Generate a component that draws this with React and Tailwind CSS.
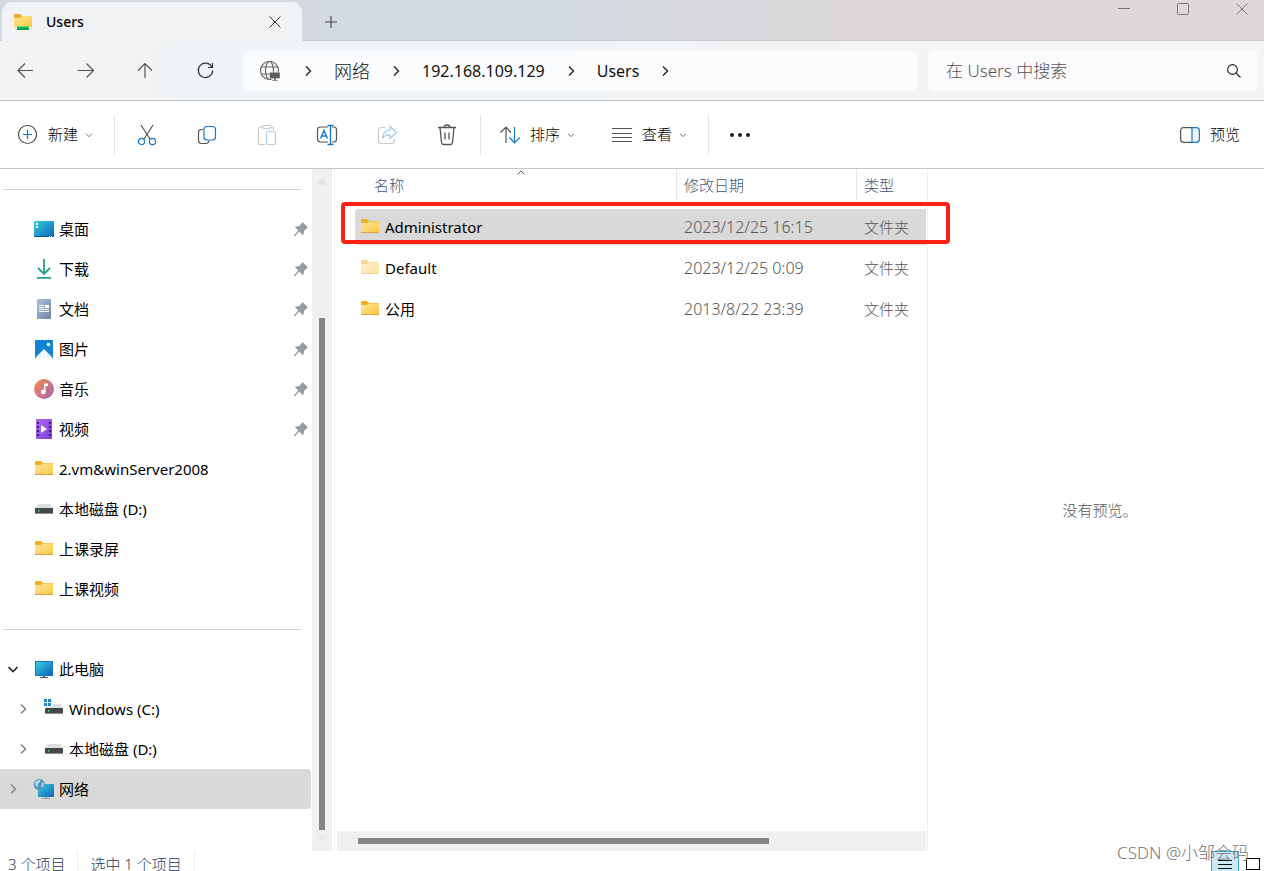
import { useState } from "react";

// =========================
// DATA
// =========================
const pinned = [
  { name: "桌面", icon: DesktopIcon, pin: true },
  { name: "下载", icon: DownloadIcon, pin: true },
  { name: "文档", icon: DocumentIcon, pin: true },
  { name: "图片", icon: PictureIcon, pin: true },
  { name: "音乐", icon: MusicIcon, pin: true },
  { name: "视频", icon: VideoIcon, pin: true },
  { name: "2.vm&winServer2008", icon: FolderIcon },
  { name: "本地磁盘 (D:)", icon: DriveIcon },
  { name: "上课录屏", icon: FolderIcon },
  { name: "上课视频", icon: FolderIcon },
];

const files = [
  { name: "Administrator", date: "2023/12/25 16:15", type: "文件夹" },
  { name: "Default", date: "2023/12/25 0:09", type: "文件夹", hidden: true },
  { name: "公用", date: "2013/8/22 23:39", type: "文件夹" },
];

// =========================
// FILE ICONS
// =========================
function FolderIcon({ className = "" }) {
  return (
    <svg className={`w-5 h-5 shrink-0 ${className}`} viewBox="0 0 20 20">
      <defs>
        <linearGradient id="folder" x1="0" y1="0" x2="1" y2="1">
          <stop offset="0" stopColor="#ffe69c" />
          <stop offset="1" stopColor="#fbc83f" />
        </linearGradient>
      </defs>
      <path d="M1 3q0-1 1-1h5l2 2h9q1 0 1 1v3H1z" fill="#ecb022" />
      <path d="M1 6h6l2-1.500h10V15q0 1-1 1H2q-1 0-1-1z" fill="url(#folder)" />
      <path d="M1 15.500h18" stroke="#dca63a" />
    </svg>
  );
}

function DesktopIcon() {
  return (
    <svg className="w-5 h-5 shrink-0" viewBox="0 0 20 20">
      <defs>
        <linearGradient id="screen" x1="0" y1="0" x2="1" y2="1">
          <stop offset="0" stopColor="#3bd0dc" />
          <stop offset="1" stopColor="#0b63bd" />
        </linearGradient>
      </defs>
      <rect y="2" width="20" height="16" rx="1" fill="url(#screen)" />
      <path d="M0 17h20q0 1-1 1H1q-1 0-1-1z" fill="#0c4f8c" />
      <path d="M2 4h2v2H2zM2 7h2v2H2z" fill="#e9fbff" />
      <path d="M15 17.500h1m1 0h1" stroke="#fff" />
    </svg>
  );
}

function DownloadIcon() {
  return (
    <svg className="w-5 h-5 shrink-0" viewBox="0 0 20 20" fill="none" stroke="#27a186" strokeWidth="1.800">
      <path d="M10 0v14M4 9l6 6 6-6M3 18.800h14" />
    </svg>
  );
}

function DocumentIcon() {
  return (
    <svg className="w-5 h-5 shrink-0" viewBox="0 0 20 20">
      <defs>
        <linearGradient id="doc" x1="0" y1="0" x2="1" y2="1">
          <stop offset="0" stopColor="#abc0d6" />
          <stop offset="1" stopColor="#6b87a6" />
        </linearGradient>
      </defs>
      <rect x="3" width="14" height="20" rx="1" fill="url(#doc)" />
      <path d="M5 6.500h5M5 8.500h5M5 10.500h10M5 12.500h10" stroke="#fff" />
      <path d="M11 6h4v3h-4z" fill="#fff" />
    </svg>
  );
}

function PictureIcon() {
  return (
    <svg className="w-5 h-5 shrink-0" viewBox="0 0 20 20">
      <rect x="1" y="1" width="18" height="18" rx="1" fill="#1183d3" />
      <path d="M2 18l8-8 8 8q-.5 1-1 1H3q-.5 0-1-1z" fill="#f2faff" />
      <circle cx="14.500" cy="5.500" r="1.800" fill="#fff" />
    </svg>
  );
}

function MusicIcon() {
  return (
    <svg className="w-5 h-5 shrink-0" viewBox="0 0 20 20">
      <defs>
        <linearGradient id="music" x1="0" y1="0" x2="1" y2="1">
          <stop offset="0.100" stopColor="#f0875a" />
          <stop offset="1" stopColor="#a662b5" />
        </linearGradient>
      </defs>
      <circle cx="10" cy="10" r="10" fill="url(#music)" />
      <path d="M10 4.500h4V7h-2.500v6H10z" fill="#fff" />
      <circle cx="9.200" cy="13" r="2.400" fill="#fff" />
    </svg>
  );
}

function VideoIcon() {
  return (
    <svg className="w-5 h-5 shrink-0" viewBox="0 0 20 20">
      <defs>
        <linearGradient id="video" x1="0" y1="0" x2="1" y2="1">
          <stop offset="0" stopColor="#b56af0" />
          <stop offset="1" stopColor="#7a3ed8" />
        </linearGradient>
      </defs>
      <rect x="2" width="16" height="20" rx="1" fill="url(#video)" />
      <path d="M4 3v15M16 3v15" stroke="#3f1c86" strokeWidth="2" strokeDasharray="2 2" />
      <path d="M7 6v8l6-4z" fill="#fff" />
    </svg>
  );
}

function DriveIcon({ windows }) {
  return (
    <svg className="w-5 h-5 shrink-0" viewBox="0 0 20 20" overflow="visible">
      <path d="M4 5h12l3 4H1z" fill="#dcdedf" />
      <rect x="1" y="9" width="18" height="6" rx="0.500" fill="#46494b" />
      <path d="M1 14.500h18" stroke="#8b8e90" />
      <path d="M4 11h1.500v1.500H4z" fill="#49e35e" />
      {windows && (
        <>
          <path d="M-1-1h9v9h-9z" fill="#fff" />
          <path d="M0 0h3v3H0zM4 0h3v3H4zM0 4h3v3H0zM4 4h3v3H4z" fill="#1a86cf" />
        </>
      )}
    </svg>
  );
}

function WindowsDriveIcon() {
  return <DriveIcon windows />;
}

function ComputerIcon() {
  return (
    <svg className="w-5 h-5 shrink-0" viewBox="0 0 20 20">
      <rect x="1" y="2" width="18" height="15" fill="#1777b9" />
      <rect x="2" y="3" width="16" height="13" fill="url(#screen)" />
      <path d="M9 17h2v1h3v1H6v-1h3z" fill="#555f68" />
    </svg>
  );
}

function NetworkIcon() {
  return (
    <svg className="w-5 h-5 shrink-0" viewBox="0 0 20 20" overflow="visible">
      <rect x="4" y="5" width="16" height="13" rx="1" fill="url(#screen)" />
      <path d="M11 18h2v1h3v1H8v-1h3z" fill="#9b9fa2" />
      <circle cx="5.300" cy="5.500" r="5.500" fill="#4a97bd" />
      <path d="M1 3.500q2-3 5-2.500 1 2-1 3t-1 4q-3-1-3-4.500" fill="#b9deeb" />
      <path d="M8 3l2 1.500-1 4-2-1z" fill="#a9d5e7" />
    </svg>
  );
}

function PinIcon() {
  return (
    <svg className="w-[14px] h-[14px] shrink-0" viewBox="0 0 14 14" fill="#929da5">
      <path d="M8.500 0L14 5.500 12.500 6.500 9.800 9.200V12L8.600 13 5.400 9.600 1 14H0v-1l4.400-4.400L1 5.300 2.200 4.200H5L7.600 1.500z" />
    </svg>
  );
}

function Chevron({ dir = "right", size = "w-3 h-3", color = "#222", width = 1.4 }) {
  const paths = {
    right: "M4 1.500L8.500 6 4 10.500",
    down: "M1.500 4L6 8.500 10.500 4",
    up: "M1 8L6 3 11 8",
  };

  return (
    <svg className={`${size} shrink-0`} viewBox="0 0 12 12" fill="none" stroke={color} strokeWidth={width}>
      <path d={paths[dir]} />
    </svg>
  );
}

// =========================
// SHARED PIECES
// =========================
function IconButton({ label, disabled, children }) {
  return (
    <button
      type="button"
      aria-label={label}
      disabled={disabled}
      className="w-10 h-10 shrink-0 flex items-center justify-center rounded"
    >
      <svg
        className="w-6 h-6"
        viewBox="0 0 24 24"
        fill="none"
        stroke={disabled ? "#c9c9c9" : "#555"}
        strokeWidth="1.200"
      >
        {children}
      </svg>
    </button>
  );
}

function Divider() {
  return <div className="w-px h-10 shrink-0 bg-[#e6e6e6]" />;
}

function SideItem({ item, chevron, active, nested, onClick }) {
  const Icon = item.icon;

  return (
    <button
      type="button"
      onClick={onClick}
      className={`w-full h-10 pr-[3px] flex items-center text-left rounded-r-sm ${nested ? "pl-[17px]" : "pl-[7px]"} ${
        active ? "bg-[#d9d9d9]" : ""
      }`}
    >
      <span className="w-[27px] shrink-0">
        {chevron && (
          <Chevron
            dir={chevron}
            color={chevron === "down" ? "#222" : "#8a8a8a"}
            width={1.6}
          />
        )}
      </span>
      <Icon />
      <span className="ml-[5px] flex-1 text-[15px] font-normal whitespace-nowrap">
        {item.name}
      </span>
      {item.pin && <PinIcon />}
    </button>
  );
}

export default function App() {
  const [search, setSearch] = useState("");
  const [place, setPlace] = useState("网络");
  const [selected, setSelected] = useState("Administrator");

  return (
    <div className="relative h-screen flex flex-col overflow-hidden bg-white text-black font-light font-['Noto_Sans','Noto_Sans_CJK_SC',sans-serif]">

      {/* TITLE BAR */}
      <header className="h-[41px] shrink-0 flex items-end pl-[2px] border-b border-[#c6cbd0] bg-linear-to-r from-[#d5d8dc] via-[#d3dbe3] via-40% to-[#dfd8d8] to-75%">
        <div className="w-[300px] h-[39px] -mb-px pl-[11px] pr-[21px] flex items-center rounded-t-[10px] bg-[#f2f3f4]">
          <svg className="w-5 h-5" viewBox="0 0 20 20">
            <path d="M1 3q0-1 1-1h5l2 2h9q1 0 1 1v3H1z" fill="#ecb022" />
            <path d="M1 6h6l2-2h10v11H1z" fill="url(#folder)" />
            <path d="M4 14h12v4H4z" fill="#22b455" />
            <path d="M1 16.500h18" stroke="#d5e8da" />
            <path d="M4 14.500h12" stroke="#5fe07c" />
            <path d="M4 16h12v2H4z" fill="#149d45" />
          </svg>
          <span className="ml-[13px] flex-1 text-sm font-medium">Users</span>
          <button type="button" aria-label="关闭标签页">
            <svg className="w-3 h-3" viewBox="0 0 12 12" stroke="#333">
              <path d="M.5.5l11 11m0-11l-11 11" />
            </svg>
          </button>
        </div>
        <button type="button" aria-label="新建标签页" className="w-[58px] h-9 flex items-center justify-center">
          <svg className="w-3 h-3" viewBox="0 0 12 12" stroke="#444" strokeWidth="1.100">
            <path d="M6 0v12M0 6h12" />
          </svg>
        </button>
        <div className="ml-auto self-start flex gap-[15px]">
          {[
            ["最小化", "M0 5.500h12"],
            ["最大化", "M1.500.5h9q1 0 1 1v9q0 1-1 1h-9q-1 0-1-1v-9q0-1 1-1z"],
            ["关闭", "M.5.5l11 11m0-11l-11 11"],
          ].map(([label, d]) => (
            <button key={label} type="button" aria-label={label} className="w-11 h-[18px] flex items-center justify-center">
              <svg className="w-3 h-3" viewBox="0 0 12 12" fill="none" stroke="#777">
                <path d={d} />
              </svg>
            </button>
          ))}
        </div>
      </header>

      {/* NAVIGATION */}
      <nav className="h-[60px] shrink-0 pl-[5px] pr-[6px] flex items-center border-b border-[#c0c8cd] bg-linear-to-r from-[#f2f3f4] via-[#eff4f7] via-35% to-[#f5f3f3] to-70%">
        <div className="flex gap-5">
          <IconButton label="后退">
            <path d="M20 11.500H5M12 4.500l-7 7 7 7" />
          </IconButton>
          <IconButton label="前进">
            <path d="M4.500 11.500H20M13.500 4.500l7 7-7 7" />
          </IconButton>
          <IconButton label="上移">
            <path d="M12 19V4.500M5 11.500l7-7 7 7" />
          </IconButton>
          <IconButton label="刷新">
            <path d="M19 8.200A7.200 7.200 0 1 0 19.700 11.500M19.500 4v4.500H15" stroke="#333" />
          </IconButton>
        </div>

        <div className="ml-[18px] flex-1 h-10 pl-[17px] flex items-center gap-5 rounded-md bg-[#fbfcfd] text-[#111]">
          <svg className="mr-[2px] w-5 h-5 shrink-0" viewBox="0 0 20 20" fill="none" stroke="#666" strokeWidth="1.200">
            <circle cx="9.500" cy="9.500" r="9" />
            <ellipse cx="9.500" cy="9.500" rx="4" ry="9" />
            <path d="M1.500 6h16M1.500 13h16" />
            <path d="M9.500 11.200h10.500v6.300h-4V19h2v1h-6v-1h2v-1.500H9.500z" fill="#5c5c5c" stroke="#f2f5f6" strokeWidth="0.500" />
          </svg>
          <Chevron />
          <button type="button" className="text-lg">网络</button>
          <Chevron />
          <button type="button" className="font-normal">192.168.109.129</button>
          <Chevron />
          <button type="button" className="font-normal">Users</button>
          <Chevron />
        </div>

        <label className="ml-[10px] w-[330px] h-[41px] pl-[18px] pr-4 flex items-center rounded-md bg-[#fbfbfb]">
          <input
            type="text"
            aria-label="搜索"
            value={search}
            onChange={(e) => setSearch(e.target.value)}
            placeholder="在 Users 中搜索"
            className="flex-1 min-w-0 text-[17px] bg-transparent outline-none placeholder:text-[#555]"
          />
          <svg className="w-4 h-4" viewBox="0 0 16 16" fill="none" stroke="#222" strokeWidth="1.100">
            <circle cx="6.500" cy="6.500" r="4.900" />
            <path d="M10 10l4.500 4.500" />
          </svg>
        </label>
      </nav>

      {/* TOOLBAR */}
      <div className="h-[68px] shrink-0 flex items-center border-b border-[#c0c8cd] bg-white text-[15px]">
        <button type="button" className="w-[114px] h-10 pl-[17px] flex items-center">
          <svg className="w-5 h-5" viewBox="0 0 20 20" fill="none" strokeWidth="1.200">
            <circle cx="10.500" cy="9.500" r="9" stroke="#555" />
            <path d="M10.500 5v9M6 9.500h9" stroke="#1478cc" />
          </svg>
          <span className="ml-[11px] mr-[7px]">新建</span>
          <Chevron dir="down" size="w-2 h-2" color="#666" />
        </button>
        <Divider />
        <div className="ml-3 mr-[13px] flex gap-5">
          <IconButton label="剪切">
            <path d="M6 2l9 14M18 2L9 16" />
            <circle cx="6.500" cy="18.500" r="3.100" stroke="#1478cc" />
            <circle cx="17.500" cy="18.500" r="3.100" stroke="#1478cc" />
          </IconButton>
          <IconButton label="复制">
            <path d="M8 6.500H6.500q-3 0-3 3v8q0 3 3 3H11q2.500 0 3-3" />
            <rect x="9" y="3.500" width="11.500" height="13.500" rx="3" stroke="#1478cc" />
          </IconButton>
          <IconButton label="粘贴" disabled>
            <path d="M8 4H5.500q-2 0-2 2v13.500q0 2 2 2H10M15 4h1.500q2 0 2 2v1" />
            <rect x="7.500" y="2.500" width="8" height="3" rx="1.500" />
            <rect x="11.500" y="8.500" width="9" height="13" rx="1.500" stroke="#a9d0f2" />
          </IconButton>
          <IconButton label="重命名">
            <path d="M13 4H5.500q-3 0-3 3v9q0 3 3 3H13M17 4h2q2.500 0 2.500 3v9q0 3-2.500 3h-2" />
            <path d="M5.500 15.500L9 7.500l3.500 8M6.800 13h4.400M15.500 2.500v19M12.500 2.500h6M12.500 21.500h6" stroke="#1478cc" strokeWidth="1.400" />
          </IconButton>
          <IconButton label="共享" disabled>
            <path d="M10 4.500H6.500q-3 0-3 3v10q0 3 3 3h10q3 0 3-3V16" />
            <path d="M15 3.500l6.500 6-6.500 6v-3.500q-5-.5-7.500 3.500.5-7.500 7.500-8.500z" stroke="#9fcbf0" />
          </IconButton>
          <IconButton label="删除">
            <path d="M3 4.500h18M5 4.500l1.500 15q.3 2 2 2h7q1.700 0 2-2L19 4.500M9 4.500q0-2.500 3-2.500t3 2.500M10 9.500v7M14 9.500v7" strokeWidth="1.300" />
          </IconButton>
        </div>
        <Divider />
        <button type="button" className="ml-[19px] w-[75px] h-10 shrink-0 flex items-center">
          <svg className="w-5 h-5 shrink-0" viewBox="0 0 20 20" fill="none" strokeWidth="1.200">
            <path d="M6 18V2M.5 7.500L6 2l5 5.500" stroke="#555" />
            <path d="M14.500 2v16M9.500 12.500l5 5.500 5.500-5.500" stroke="#1478cc" />
          </svg>
          <span className="ml-[10px] mr-[7px] shrink-0">排序</span>
          <Chevron dir="down" size="w-2 h-2" color="#666" />
        </button>
        <button type="button" className="ml-[37px] h-10 shrink-0 flex items-center">
          <svg className="w-5 h-5 shrink-0" viewBox="0 0 20 20" stroke="#555">
            <path d="M0 3.500h20M0 8.500h20M0 12.500h20M0 16.500h20" />
          </svg>
          <span className="ml-[10px] mr-[7px] shrink-0">查看</span>
          <Chevron dir="down" size="w-2 h-2" color="#666" />
        </button>
        <div className="ml-[21px] mr-[11px]">
          <Divider />
        </div>
        <button type="button" aria-label="更多" className="w-10 h-10 flex items-center justify-center gap-1">
          <i className="w-1 h-1 rounded-full bg-[#1b1b1b]" />
          <i className="w-1 h-1 rounded-full bg-[#1b1b1b]" />
          <i className="w-1 h-1 rounded-full bg-[#1b1b1b]" />
        </button>
        <button type="button" className="ml-auto mr-6 h-10 flex items-center">
          <svg className="w-5 h-5" viewBox="0 0 20 20" fill="none" strokeWidth="1.200">
            <path d="M12 2.700H3.600q-3 0-3 3v8.600q0 3 3 3H12" stroke="#555" />
            <path d="M12 2.700h4.400q3 0 3 3v8.600q0 3-3 3H12z" stroke="#1478cc" fill="#f0f8ff" />
          </svg>
          <span className="ml-[10px]">预览</span>
        </button>
      </div>

      <div className="flex-1 min-h-0 flex">

        {/* SIDEBAR */}
        <aside className="w-[311px] shrink-0 pt-5 overflow-hidden">
          <hr className="ml-1 mr-[10px] mb-[19px] border-[#d0d0d0]" />
          {pinned.map((item) => (
            <SideItem
              key={item.name}
              item={item}
              active={place === item.name}
              onClick={() => setPlace(item.name)}
            />
          ))}
          <hr className="mt-5 ml-1 mr-[10px] mb-[19px] border-[#d0d0d0]" />
          <SideItem item={{ name: "此电脑", icon: ComputerIcon }} chevron="down" />
          <SideItem item={{ name: "Windows (C:)", icon: WindowsDriveIcon }} chevron="right" nested />
          <SideItem item={{ name: "本地磁盘 (D:)", icon: DriveIcon }} chevron="right" nested />
          <SideItem
            item={{ name: "网络", icon: NetworkIcon }}
            chevron="right"
            active={place === "网络"}
            onClick={() => setPlace("网络")}
          />
        </aside>

        {/* SIDEBAR SCROLLBAR */}
        <div className="ml-px w-5 shrink-0 pt-2 pb-2 flex flex-col items-center bg-[#f0f0f0]">
          <svg className="w-[10px] h-2" viewBox="0 0 10 8" fill="#e4e4e4">
            <path d="M5 0l5 8H0z" />
          </svg>
          <div className="mt-[133px] mb-[5px] flex-1 w-[6px] bg-[#858585]" />
          <svg className="w-[10px] h-2" viewBox="0 0 10 8" fill="#e9e9e9">
            <path d="M5 8l5-8H0z" />
          </svg>
        </div>
        <div className="w-[5px] shrink-0 flex justify-center">
          <div className="w-px bg-[#f3f3f3]" />
        </div>

        {/* FILE LIST */}
        <main className="relative w-[591px] shrink-0 flex flex-col border-r border-[#f0f0f0]">
          <div className="flex-1 pl-[18px] pr-px">
            <table className="w-full table-fixed border-collapse text-[15px] text-left">
              <thead>
                <tr className="text-[#3f5674]">
                  <th className="relative w-[322px] h-10 p-0 align-top font-light">
                    <div className="h-8 pl-[19px] flex items-center border-r border-[#e5e5e5]">名称</div>
                    <span className="absolute left-[161px] top-0 flex">
                      <Chevron dir="up" size="w-[10px] h-[8px]" color="#555" width={1.4} />
                    </span>
                  </th>
                  <th className="w-[180px] h-10 p-0 align-top font-light">
                    <div className="h-8 pl-[7px] flex items-center border-r border-[#e5e5e5]">修改日期</div>
                  </th>
                  <th className="h-10 p-0 align-top font-light">
                    <div className="h-8 pl-[7px] flex items-center">类型</div>
                  </th>
                </tr>
              </thead>
              <tbody>
                {files.map((file) => {
                  const bg = selected === file.name ? "bg-[#d9d9d9]" : "";

                  return (
                    <tr key={file.name} onClick={() => setSelected(file.name)}>
                      <td className="h-[41px] p-0 align-top font-normal">
                        <div className={`h-9 pl-[5px] flex items-center rounded-l-sm ${bg}`}>
                          <FolderIcon className={file.hidden ? "opacity-50" : ""} />
                          <span className="ml-[5px]">{file.name}</span>
                        </div>
                      </td>
                      <td className="h-[41px] p-0 align-top text-[#555]">
                        <div className={`h-9 pl-[7px] flex items-center text-base ${bg}`}>{file.date}</div>
                      </td>
                      <td className="h-[41px] p-0 align-top text-[#555]">
                        <div className={`h-9 pl-[7px] flex items-center ${bg}`}>{file.type}</div>
                      </td>
                    </tr>
                  );
                })}
              </tbody>
            </table>
          </div>

          {/* red marker round the first folder */}
          <div className="absolute z-10 left-1 top-[33px] w-[609px] h-[42px] border-4 border-[#fb2115] rounded-[4px] pointer-events-none" />

          <div className="mr-px h-5 shrink-0 pl-[21px] flex items-center bg-[#f0f0f0]">
            <div className="w-[411px] h-[6px] bg-[#858585]" />
          </div>
        </main>

        {/* PREVIEW */}
        <section className="flex-1 min-w-0 pl-2 flex items-center justify-center text-[15px] text-[#555]">
          没有预览。
        </section>
      </div>

      {/* STATUS BAR */}
      <footer className="h-5 shrink-0 pl-2 pr-1 flex items-start text-[15px] leading-[26px] text-[#1f3a60]">
        <span>3 个项目</span>
        <div className="ml-3 mr-3 w-px h-7 bg-[#ececec]" />
        <span>选中 1 个项目</span>
        <div className="ml-3 w-px h-7 bg-[#ececec]" />
        <button type="button" aria-label="详细信息" className="ml-auto w-7 h-7 shrink-0 pt-2 flex justify-center border border-[#3ba3cf] bg-[#cde8f7]">
          <svg className="w-[14px] h-[10px]" viewBox="0 0 14 10" stroke="#111">
            <path d="M0 .500h14M0 4.500h14M0 8.500h14" />
          </svg>
        </button>
        <button type="button" aria-label="大图标" className="ml-[7px] mt-[7px] w-[14px] h-3 shrink-0 border border-black" />
      </footer>

      <div className="absolute right-[15px] bottom-[6px] text-[17px] leading-6 text-[#777] pointer-events-none">
        CSDN @小邹会码
      </div>
    </div>
  );
}
